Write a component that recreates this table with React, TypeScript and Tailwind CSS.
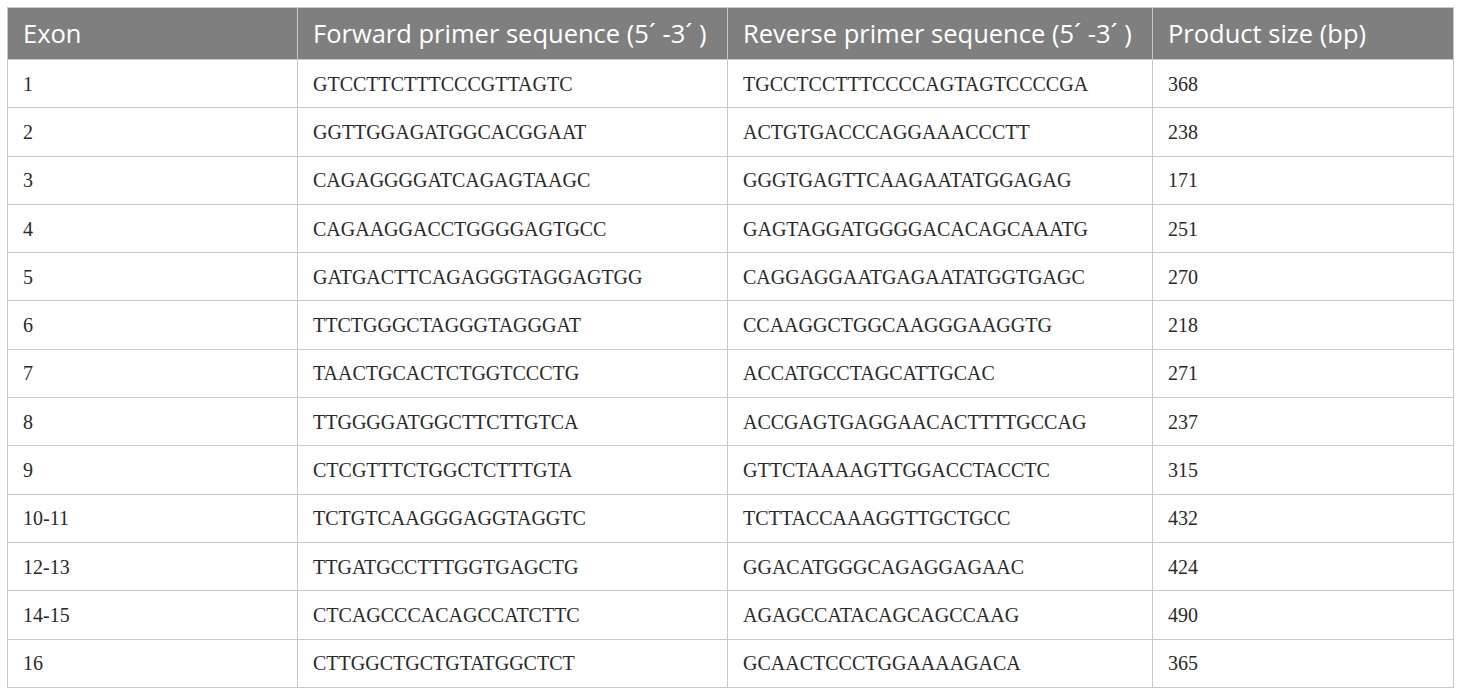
const rows: [string, string, string, string][] = [
  ['1', 'GTCCTTCTTTCCCGTTAGTC', 'TGCCTCCTTTCCCCAGTAGTCCCCGA', '368'],
  ['2', 'GGTTGGAGATGGCACGGAAT', 'ACTGTGACCCAGGAAACCCTT', '238'],
  ['3', 'CAGAGGGGATCAGAGTAAGC', 'GGGTGAGTTCAAGAATATGGAGAG', '171'],
  ['4', 'CAGAAGGACCTGGGGAGTGCC', 'GAGTAGGATGGGGACACAGCAAATG', '251'],
  ['5', 'GATGACTTCAGAGGGTAGGAGTGG', 'CAGGAGGAATGAGAATATGGTGAGC', '270'],
  ['6', 'TTCTGGGCTAGGGTAGGGAT', 'CCAAGGCTGGCAAGGGAAGGTG', '218'],
  ['7', 'TAACTGCACTCTGGTCCCTG', 'ACCATGCCTAGCATTGCAC', '271'],
  ['8', 'TTGGGGATGGCTTCTTGTCA', 'ACCGAGTGAGGAACACTTTTGCCAG', '237'],
  ['9', 'CTCGTTTCTGGCTCTTTGTA', 'GTTCTAAAAGTTGGACCTACCTC', '315'],
  ['10-11', 'TCTGTCAAGGGAGGTAGGTC', 'TCTTACCAAAGGTTGCTGCC', '432'],
  ['12-13', 'TTGATGCCTTTGGTGAGCTG', 'GGACATGGGCAGAGGAGAAC', '424'],
  ['14-15', 'CTCAGCCCACAGCCATCTTC', 'AGAGCCATACAGCAGCCAAG', '490'],
  ['16', 'CTTGGCTGCTGTATGGCTCT', 'GCAACTCCCTGGAAAAGACA', '365'],
];

const headers = [
  'Exon',
  'Forward primer sequence (5´ -3´ )',
  'Reverse primer sequence (5´ -3´ )',
  'Product size (bp)',
];

export default function App() {
  return (
    <div className="w-[1460px] h-[695px] bg-white pt-[7px] pl-[7px]">
      <table className="border-collapse table-fixed w-[1446px] border border-[#c8c8c8]">
        <colgroup>
          <col className="w-[290px]" />
          <col className="w-[430px]" />
          <col className="w-[425px]" />
          <col className="w-[301px]" />
        </colgroup>
        <thead>
          <tr className="bg-[#7f7f7f] h-[52px]">
            {headers.map((h) => (
              <th
                key={h}
                className="border border-[#c8c8c8] px-[15px] text-left font-normal text-white text-[25.5px] font-['Open_Sans',sans-serif] whitespace-nowrap"
              >
                {h}
              </th>
            ))}
          </tr>
        </thead>
        <tbody>
          {rows.map((r) => (
            <tr key={r[0]} className="h-[48.3px]">
              {r.map((c, i) => (
                <td
                  key={i}
                  className="border border-[#c8c8c8] px-[15px] text-[20px] text-[#2a2a2a] font-['Liberation_Serif',serif] whitespace-nowrap"
                >
                  {c}
                </td>
              ))}
            </tr>
          ))}
        </tbody>
      </table>
    </div>
  );
}
